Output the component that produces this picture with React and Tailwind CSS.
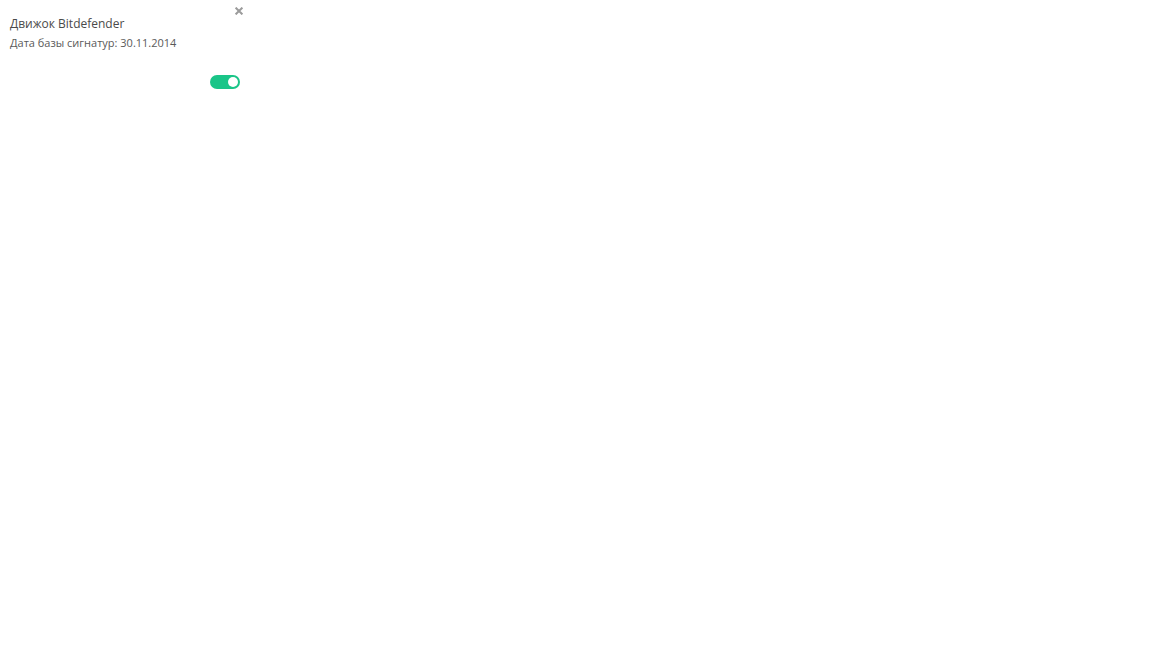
import React, { useState } from 'react';

export default function App() {
    const [open, setOpen] = useState(true);
    const [enabled, setEnabled] = useState(true);

    return (
        <main className="min-h-screen bg-white font-['Open_Sans','Noto_Sans',sans-serif] text-[#4a4a4a]">
            {open && (
                <section className="w-full max-w-[250px] px-2.5 pt-4 pb-3">
                    <header className="flex items-start justify-between">
                        <div>
                            <h1 className="text-[12px] leading-4">
                                <label htmlFor="engine-enabled">Движок Bitdefender</label>
                            </h1>
                            <p className="mt-[3px] text-[11px] leading-4 text-[#5a5a5a]">Дата базы сигнатур: 30.11.2014</p>
                        </div>
                        <button
                            type="button"
                            aria-label="Закрыть"
                            className="-mt-3 -mr-1.5 flex size-3.5 cursor-pointer items-center justify-center text-[#9b9b9b]"
                            onClick={() => setOpen(false)}
                        >
                            <svg viewBox="0 0 8 8" className="size-2" fill="none" stroke="currentColor" strokeWidth="2">
                                <path d="M0.6 0.6 7.4 7.4M7.4 0.6 0.6 7.4" />
                            </svg>
                        </button>
                    </header>
                    <div className="mt-6 flex justify-end">
                        <input
                            id="engine-enabled"
                            type="checkbox"
                            role="switch"
                            checked={enabled}
                            onChange={(e) => setEnabled(e.target.checked)}
                            className="flex h-3.5 w-[30px] cursor-pointer appearance-none items-center rounded-full bg-gray-300 px-0.5 before:size-2.5 before:rounded-full before:bg-white checked:justify-end checked:bg-[#1ac588]"
                        />
                    </div>
                </section>
            )}
        </main>
    );
}
